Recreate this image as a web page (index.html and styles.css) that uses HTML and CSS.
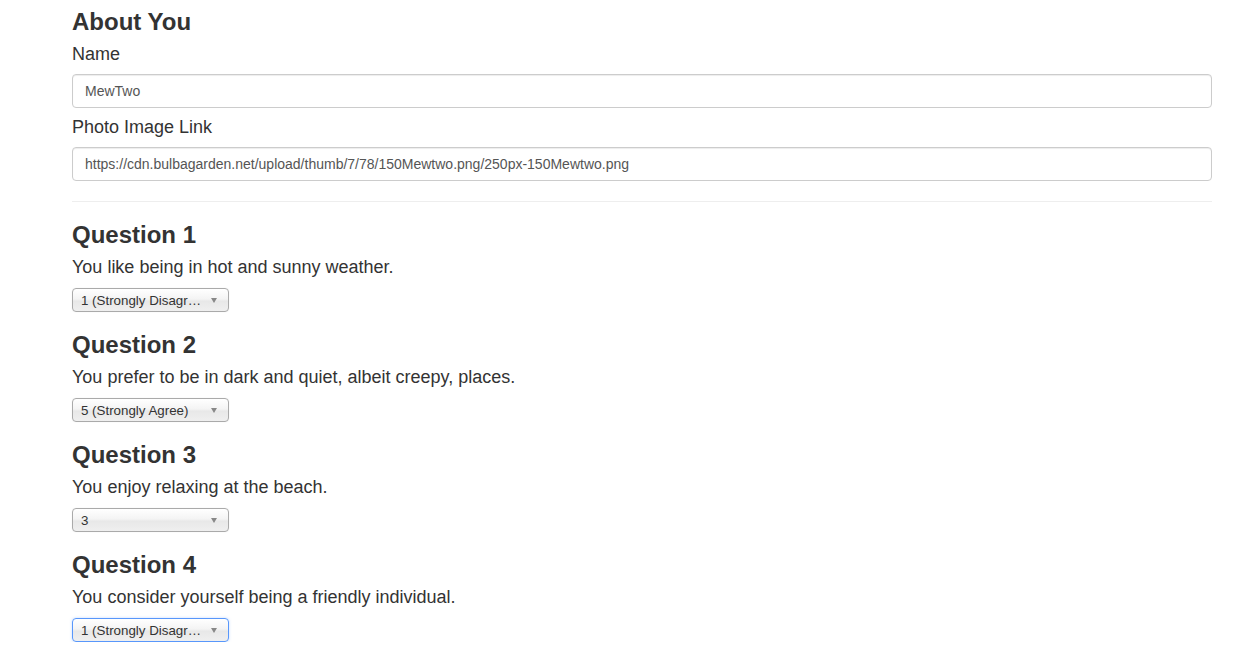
FILE: index.html
```html
<!DOCTYPE html>
<html lang="en">
<head>
<meta charset="utf-8">
<title>Survey</title>
<link rel="stylesheet" href="styles.css">
</head>
<body>
<main class="container">
  <section class="about">
    <h3 class="heading">About You</h3>
    <div class="form-group">
      <label class="field-label" for="name">Name</label>
      <input class="form-control" id="name" type="text" value="MewTwo">
    </div>
    <div class="form-group">
      <label class="field-label" for="photo">Photo Image Link</label>
      <input class="form-control" id="photo" type="text" value="https://cdn.bulbagarden.net/upload/thumb/7/78/150Mewtwo.png/250px-150Mewtwo.png">
    </div>
  </section>
  <hr class="divider">
  <section class="question">
    <h3 class="heading">Question 1</h3>
    <p class="prompt">You like being in hot and sunny weather.</p>
    <div class="select-wrap"><select class="chosen"><option>1 (Strongly Disagree)</option><option>2</option><option>3</option><option>4</option><option>5 (Strongly Agree)</option></select><span class="arrow"></span></div>
  </section>
  <section class="question">
    <h3 class="heading">Question 2</h3>
    <p class="prompt">You prefer to be in dark and quiet, albeit creepy, places.</p>
    <div class="select-wrap"><select class="chosen"><option>5 (Strongly Agree)</option><option>1 (Strongly Disagree)</option><option>2</option><option>3</option><option>4</option></select><span class="arrow"></span></div>
  </section>
  <section class="question">
    <h3 class="heading">Question 3</h3>
    <p class="prompt">You enjoy relaxing at the beach.</p>
    <div class="select-wrap"><select class="chosen"><option>3</option><option>1 (Strongly Disagree)</option><option>2</option><option>4</option><option>5 (Strongly Agree)</option></select><span class="arrow"></span></div>
  </section>
  <section class="question">
    <h3 class="heading">Question 4</h3>
    <p class="prompt">You consider yourself being a friendly individual.</p>
    <div class="select-wrap"><select class="chosen is-focused"><option>1 (Strongly Disagree)</option><option>2</option><option>3</option><option>4</option><option>5 (Strongly Agree)</option></select><span class="arrow"></span></div>
  </section>
</main>
</body>
</html>
```
FILE: styles.css
```css
* { box-sizing: border-box; }
html, body { margin: 0; padding: 0; background: #fff; }
body {
  font-family: "Liberation Sans", Arial, Helvetica, sans-serif;
  font-size: 14px;
  line-height: 1.42857;
  color: #333;
}
.container {
  width: 1140px;
  margin-left: 72px;
  padding-top: 9px;
}
.heading {
  font-size: 24px;
  font-weight: bold;
  line-height: 27px;
  margin: 19px 0 9px;
  color: #333;
}
.about .heading { margin-top: 0; line-height: 26.4px; }
.form-group { margin-bottom: 9px; }
.field-label {
  display: block;
  font-size: 18px;
  line-height: 21px;
  margin-bottom: 9px;
}
.form-control {
  display: block;
  width: 100%;
  height: 34px;
  padding: 6px 12px;
  font-family: inherit;
  font-size: 14px;
  color: #555;
  background: #fff;
  border: 1px solid #ccc;
  border-radius: 4px;
  box-shadow: inset 0 1px 1px rgba(0,0,0,.075);
  outline: none;
}
.divider {
  margin: 20px 0 0;
  border: 0;
  border-top: 1px solid #eee;
}
.prompt {
  font-size: 18px;
  line-height: 21px;
  margin: 0 0 10px;
}
.select-wrap {
  position: relative;
  width: 157px;
  height: 24px;
}
.chosen {
  -webkit-appearance: none;
  appearance: none;
  display: block;
  width: 157px;
  height: 24px;
  margin: 0;
  padding: 0 26px 0 8px;
  font-family: inherit;
  font-size: 13.333px;
  color: #333;
  border: 1px solid #aaa;
  border-radius: 4px;
  background: linear-gradient(#fff 0%, #f4f4f4 45%, #e8e8e8 55%, #efefef 100%);
  box-shadow: 0 0 2px rgba(0,0,0,.05);
  white-space: nowrap;
  overflow: hidden;
  text-overflow: ellipsis;
  outline: none;
}
.chosen.is-focused { border-color: #5897fb; box-shadow: 0 0 3px rgba(88,151,251,.35); }
.arrow {
  position: absolute;
  right: 12px;
  top: 10px;
  width: 0;
  height: 0;
  border-left: 3.5px solid transparent;
  border-right: 3.5px solid transparent;
  border-top: 5px solid #888;
  pointer-events: none;
}
```
